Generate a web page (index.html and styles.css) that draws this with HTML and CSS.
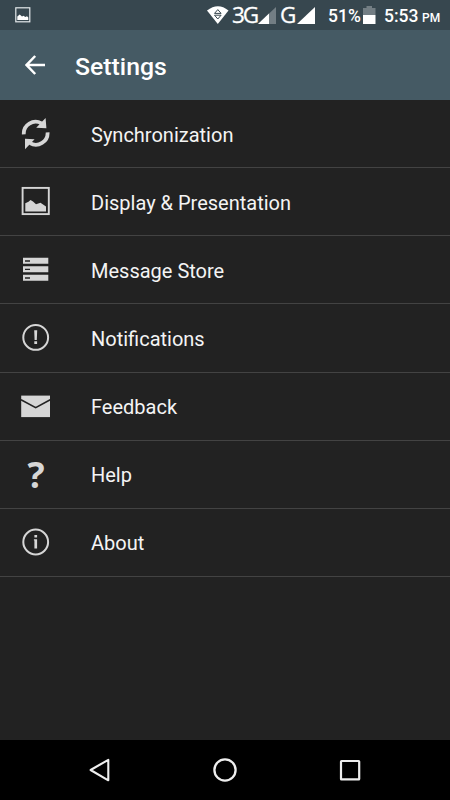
FILE: index.html
```
<!doctype html>
<html lang="en">
<head>
    <meta charset="UTF-8">
    <meta name="viewport" content="width=device-width, initial-scale=1.0">
    <title>Settings</title>
    <link rel="stylesheet" href="styles.css">
</head>
<body>
    <div class="status">
        <svg class="shot" width="16" height="16" viewBox="0 0 16 16">
            <rect x="0.8" y="0.8" width="14" height="14" fill="none" stroke="#e4e9eb" stroke-width="1.2"/>
            <path d="M2.3 13V9.5L4.7 7.5 7 9.5 8.5 8.7 10.3 10 12 9.3 13.3 10.5V13z" fill="#fff"/>
        </svg>
        <svg class="wifi" width="22" height="18" viewBox="0 0 22 18">
            <path d="M0 4.5Q11-4 21.5 4.5L10.8 18z" fill="#fff"/>
            <path d="M10.8 3.6L14.1 7.4H7.5zM7.5 9.2H14.1L10.8 13z" fill="#fff" stroke="#37474f" stroke-width="1"/>
        </svg>
        <span class="net net-3g">3G</span>
        <svg class="signal" width="18" height="17" viewBox="0 0 18 17">
            <path d="M0 17L18 0V17z" fill="#737e84"/>
            <path d="M0 17L11 6.6V17z" fill="#fff"/>
        </svg>
        <span class="net net-g">G</span>
        <svg class="signal" width="18" height="17" viewBox="0 0 18 17">
            <path d="M0 17L18 0V17z" fill="#fff"/>
        </svg>
        <span class="percent">51%</span>
        <svg class="battery" width="13" height="18" viewBox="0 0 13 18">
            <path d="M0 2H3.5V0H9V2H12.5V9H0z" fill="#737e84"/>
            <path d="M0 9H12.5V18H0z" fill="#fff"/>
        </svg>
        <span class="time">5:53</span>
        <span class="pm">PM</span>
    </div>
    <div class="header">
        <svg class="back" width="20" height="20" viewBox="0 0 20 20">
            <path d="M10.2 1L1.6 10 10.2 19M1.6 10H20" fill="none" stroke="#fff" stroke-width="2.5"/>
        </svg>
        <h1>Settings</h1>
    </div>
    <ul class="list">
        <li>
            <svg class="icon" viewBox="0 0 32 32">
                <path d="M3.8 16.4A11.8 11.8 0 0 1 21.5 5.4M27.6 14.3A11.8 11.8 0 0 1 10 25.2" fill="none" stroke="#d6d6d6" stroke-width="3.8"/>
                <path d="M25.6 0L26.4 10.2 16.2 9.8zM5 31.2V20.8L14.6 21.2z" fill="#d6d6d6"/>
            </svg>
            <span>Synchronization</span>
        </li>
        <li>
            <svg class="icon" viewBox="0 0 32 32">
                <rect x="2.6" y="1.9" width="26.2" height="26.2" fill="none" stroke="#d6d6d6" stroke-width="1.9"/>
                <path d="M5.3 25.5V17.3L8.5 15.7 10.5 14 13 15.4 16 18.3 20.5 16.8 26 20.6V25.5z" fill="#d6d6d6"/>
            </svg>
            <span>Display &amp; Presentation</span>
        </li>
        <li>
            <svg class="icon" viewBox="0 0 32 32">
                <path d="M3 3.8H28.3V9.8H3zM3 12.2H28.3V18.2H3zM3 20.8H28.3V26.8H3z" fill="#d6d6d6"/>
                <path d="M5 7H10M5 15.4H10M5 24H10" stroke="#222" stroke-width="1.3"/>
            </svg>
            <span>Message Store</span>
        </li>
        <li>
            <svg class="icon" viewBox="0 0 32 32">
                <circle cx="15.7" cy="15.4" r="12.4" fill="none" stroke="#d6d6d6" stroke-width="2"/>
                <path d="M14.2 8.2H17.2L16.8 18H14.6zM14.3 19.3H17.1V22H14.3z" fill="#d6d6d6"/>
            </svg>
            <span>Notifications</span>
        </li>
        <li>
            <svg class="icon" viewBox="0 0 32 32">
                <rect x="1.2" y="4.6" width="28.8" height="21.5" fill="#d6d6d6"/>
                <path d="M1 8.8L15.7 16.6 30.2 8.8" fill="none" stroke="#222" stroke-width="1.6"/>
            </svg>
            <span>Feedback</span>
        </li>
        <li>
            <span class="icon question">?</span>
            <span>Help</span>
        </li>
        <li>
            <svg class="icon" viewBox="0 0 32 32">
                <circle cx="15.7" cy="15" r="12.4" fill="none" stroke="#d6d6d6" stroke-width="2"/>
                <path d="M14.4 8.1H17.1V10.6H14.4zM13.9 12.3H17.1V21.6H14.4V13.4H13.9z" fill="#d6d6d6"/>
            </svg>
            <span>About</span>
        </li>
    </ul>
    <div class="nav">
        <svg width="24" height="26" viewBox="0 0 24 26">
            <path d="M20.3 2.8V23.3L2.6 13z" fill="none" stroke="#eee" stroke-width="2.1" stroke-linejoin="round"/>
        </svg>
        <svg width="24" height="26" viewBox="0 0 24 26">
            <circle cx="12" cy="13" r="10.6" fill="none" stroke="#eee" stroke-width="2.3"/>
        </svg>
        <svg width="24" height="26" viewBox="0 0 24 26">
            <rect x="3" y="4" width="18.2" height="18.4" rx="0.5" fill="none" stroke="#eee" stroke-width="2.2"/>
        </svg>
    </div>
</body>
</html>
```
FILE: styles.css
```
*{
    padding:0;
    margin:0;
    box-sizing:border-box;
}
body{
    display:flex;
    flex-direction:column;
    width:450px;
    height:800px;
    background:#222;
    color:#fff;
    font-family:Roboto, sans-serif;
    overflow:hidden;
}
li{
    list-style:none;
}
svg{
    display:block;
    flex:none;
}
.status{
    display:flex;
    align-items:center;
    height:30px;
    background:#37474f;
    white-space:nowrap;
    line-height:30px;
}
.status span{
    flex:none;
}
.shot{
    margin-left:15px;
}
.wifi{
    margin-left:176px;
}
.net{
    font-family:"Open Sans", sans-serif;
    font-size:22.5px;
    font-weight:500;
    letter-spacing:-2px;
    -webkit-text-stroke:.3px #fff;
}
.net-3g{
    width:26px;
    margin-left:3px;
}
.net-g{
    width:15px;
    margin-left:4px;
}
.signal + .net-g + .signal{
    margin-left:2px;
}
.percent{
    width:33px;
    margin-left:13px;
    padding-top:2px;
    font-size:17.5px;
    font-weight:500;
}
.battery{
    margin-left:2px;
}
.time{
    width:36px;
    margin-left:8px;
    padding-top:2px;
    font-size:17.5px;
    font-weight:500;
}
.pm{
    margin-left:2px;
    padding-top:5px;
    font-size:12px;
    font-weight:500;
}
.header{
    display:flex;
    align-items:center;
    height:70px;
    padding-left:25px;
    background:#455a64;
}
.header h1{
    margin-left:30px;
    padding-top:3px;
    font-size:24.8px;
    font-weight:500;
}
.list{
    flex:1;
}
.list li{
    display:flex;
    align-items:center;
    height:68.15px;
    padding:1px 0 0 20px;
    border-bottom:1px solid #434343;
    font-size:20px;
    color:#f4f4f4;
}
.list li span:last-child{
    padding-top:1px;
}
.icon{
    flex:none;
    width:32px;
    height:32px;
    margin-right:39px;
}
.list .question{
    font:bold 36px/31px "Open Sans", sans-serif;
    text-align:center;
    color:#d6d6d6;
}
.nav{
    display:flex;
    align-items:center;
    justify-content:space-between;
    height:60px;
    padding:0 88px;
    background:#000;
}
```
